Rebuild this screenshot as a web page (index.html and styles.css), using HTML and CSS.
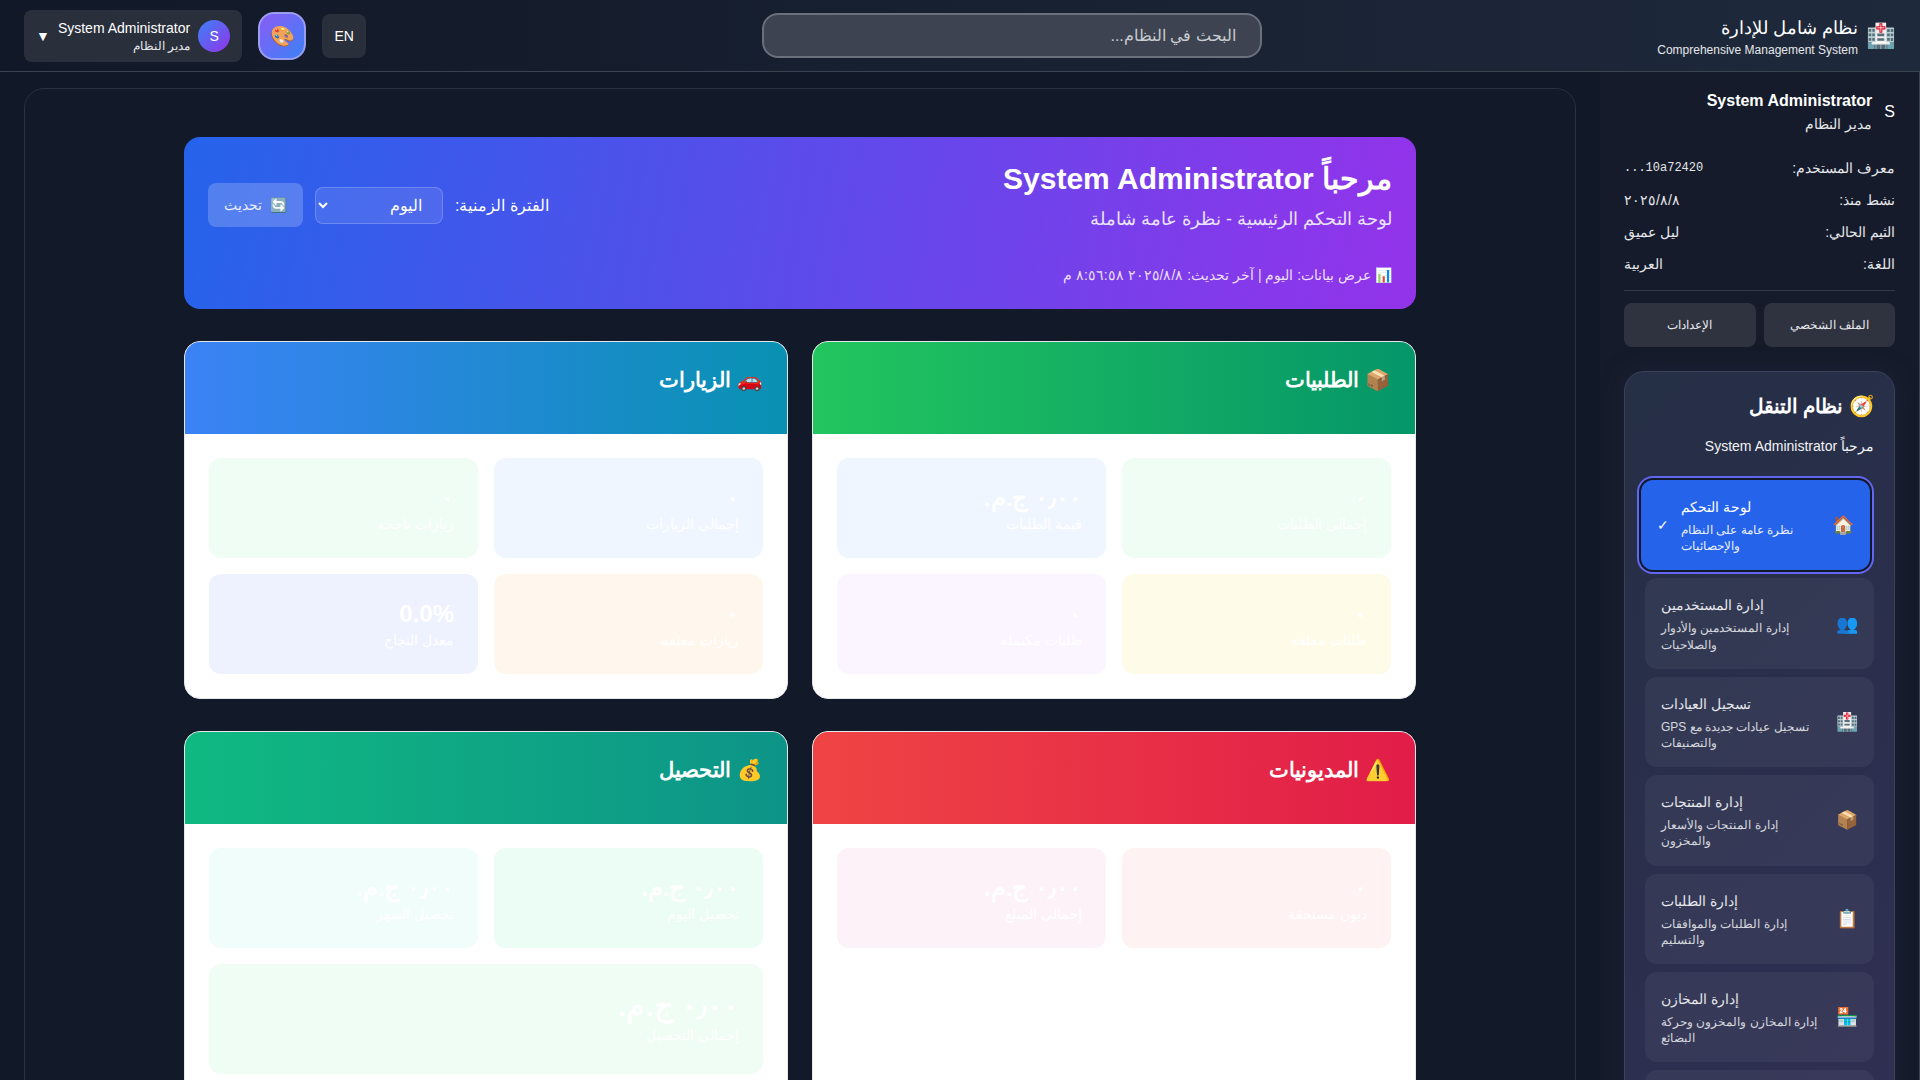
FILE: index.html
```html
<!DOCTYPE html>
<html lang="ar" dir="rtl">
<head>
<meta charset="utf-8">
<title>نظام شامل للإدارة</title>
<link rel="stylesheet" href="styles.css">
</head>
<body>
<div class="app">
  <header class="topbar">
    <div class="brand">
      <span class="brand-icon">🏥</span>
      <div>
        <div class="brand-title">نظام شامل للإدارة</div>
        <div class="brand-sub">Comprehensive Management System</div>
      </div>
    </div>
    <input class="search" type="text" placeholder="البحث في النظام...">
    <div class="top-actions">
      <button class="lang">EN</button>
      <button class="palette">🎨</button>
      <div class="chip">
        <span class="chip-avatar">S</span>
        <div class="chip-text">
          <div class="chip-name">System Administrator</div>
          <div class="chip-role">مدير النظام</div>
        </div>
        <span class="chip-caret">▼</span>
      </div>
    </div>
  </header>
  <div class="body">
    <aside class="sidebar">
      <div class="me">
        <span class="me-initial">S</span>
        <div>
          <div class="me-name">System Administrator</div>
          <div class="me-role">مدير النظام</div>
        </div>
      </div>
      <dl class="facts">
        <div class="fact"><dt>معرف المستخدم:</dt><dd class="mono">10a72420...</dd></div>
        <div class="fact"><dt>نشط منذ:</dt><dd>٢٠٢٥/٨/٨</dd></div>
        <div class="fact"><dt>الثيم الحالي:</dt><dd>ليل عميق</dd></div>
        <div class="fact"><dt>اللغة:</dt><dd>العربية</dd></div>
      </dl>
      <div class="me-actions">
        <button class="me-btn">الملف الشخصي</button>
        <button class="me-btn">الإعدادات</button>
      </div>
      <nav class="nav">
        <h2 class="nav-title">🧭 نظام التنقل</h2>
        <p class="nav-hello">مرحباً System Administrator</p>
        <ul class="nav-list">
          <li class="nav-item active">
            <span class="nav-icon">🏠</span>
            <div class="nav-text">
              <div class="nav-name">لوحة التحكم</div>
              <div class="nav-desc">نظرة عامة على النظام والإحصائيات</div>
            </div>
            <span class="nav-check">✓</span>
          </li>
          <li class="nav-item">
            <span class="nav-icon">👥</span>
            <div class="nav-text">
              <div class="nav-name">إدارة المستخدمين</div>
              <div class="nav-desc">إدارة المستخدمين والأدوار والصلاحيات</div>
            </div>
          </li>
          <li class="nav-item">
            <span class="nav-icon">🏥</span>
            <div class="nav-text">
              <div class="nav-name">تسجيل العيادات</div>
              <div class="nav-desc">تسجيل عيادات جديدة مع GPS والتصنيفات</div>
            </div>
          </li>
          <li class="nav-item">
            <span class="nav-icon">📦</span>
            <div class="nav-text">
              <div class="nav-name">إدارة المنتجات</div>
              <div class="nav-desc">إدارة المنتجات والأسعار والمخزون</div>
            </div>
          </li>
          <li class="nav-item">
            <span class="nav-icon">📋</span>
            <div class="nav-text">
              <div class="nav-name">إدارة الطلبات</div>
              <div class="nav-desc">إدارة الطلبات والموافقات والتسليم</div>
            </div>
          </li>
          <li class="nav-item">
            <span class="nav-icon">🏪</span>
            <div class="nav-text">
              <div class="nav-name">إدارة المخازن</div>
              <div class="nav-desc">إدارة المخازن والمخزون وحركة البضائع</div>
            </div>
          </li>
          <li class="nav-item">
            <span class="nav-icon">📊</span>
            <div class="nav-text">
              <div class="nav-name">التقارير</div>
              <div class="nav-desc">التقارير والإحصائيات التفصيلية</div>
            </div>
          </li>
        </ul>
      </nav>
    </aside>
    <main class="main">
      <div class="panel">
        <div class="dash">
          <section class="hero">
            <div class="hero-row">
              <div class="hero-copy">
                <h1 class="hero-title">مرحباً System Administrator</h1>
                <p class="hero-sub">لوحة التحكم الرئيسية - نظرة عامة شاملة</p>
              </div>
              <div class="hero-controls">
                <label class="period-label">الفترة الزمنية:</label>
                <select class="period">
                  <option>اليوم</option>
                  <option>هذا الأسبوع</option>
                  <option>هذا الشهر</option>
                </select>
                <button class="refresh"><span>🔄</span><span>تحديث</span></button>
              </div>
            </div>
            <p class="hero-info">📊 عرض بيانات: اليوم | آخر تحديث: ٢٠٢٥/٨/٨ ٨:٥٦:٥٨ م</p>
          </section>
          <div class="cards">
            <article class="card">
              <h3 class="card-head head-green">📦 الطلبيات</h3>
              <div class="stats">
                <div class="stat bg-green"><div class="val">٠</div><div class="lbl">إجمالي الطلبات</div></div>
                <div class="stat bg-blue"><div class="val">٠٫٠٠ ج.م.</div><div class="lbl">قيمة الطلبات</div></div>
                <div class="stat bg-yellow"><div class="val">٠</div><div class="lbl">طلبات معلقة</div></div>
                <div class="stat bg-purple"><div class="val">٠</div><div class="lbl">طلبات مكتملة</div></div>
              </div>
            </article>
            <article class="card">
              <h3 class="card-head head-blue">🚗 الزيارات</h3>
              <div class="stats">
                <div class="stat bg-blue"><div class="val">٠</div><div class="lbl">إجمالي الزيارات</div></div>
                <div class="stat bg-green"><div class="val">٠</div><div class="lbl">زيارات ناجحة</div></div>
                <div class="stat bg-orange"><div class="val">٠</div><div class="lbl">زيارات معلقة</div></div>
                <div class="stat bg-indigo"><div class="val">0.0%</div><div class="lbl">معدل النجاح</div></div>
              </div>
            </article>
            <article class="card">
              <h3 class="card-head head-red">⚠️ المديونيات</h3>
              <div class="stats">
                <div class="stat bg-red"><div class="val">٠</div><div class="lbl">ديون مستحقة</div></div>
                <div class="stat bg-pink"><div class="val">٠٫٠٠ ج.م.</div><div class="lbl">إجمالي المبلغ</div></div>
              </div>
            </article>
            <article class="card">
              <h3 class="card-head head-teal">💰 التحصيل</h3>
              <div class="stats">
                <div class="stat bg-emerald"><div class="val">٠٫٠٠ ج.م.</div><div class="lbl">تحصيل اليوم</div></div>
                <div class="stat bg-teal"><div class="val">٠٫٠٠ ج.م.</div><div class="lbl">تحصيل الشهر</div></div>
                <div class="stat stat-wide bg-green"><div class="val val-big">٠٫٠٠ ج.م.</div><div class="lbl">إجمالي التحصيل</div></div>
              </div>
            </article>
          </div>
        </div>
      </div>
    </main>
  </div>
</div>
</body>
</html>
```
FILE: styles.css
```css
* { box-sizing: border-box; }
html, body { margin: 0; height: 100%; overflow: hidden; }
body {
  font-family: "Liberation Sans", sans-serif;
  background: #111827;
  color: #fff;
  font-size: 16px;
}
h1, h2, h3, p, ul, dl, dd { margin: 0; padding: 0; }
ul { list-style: none; }
button { font: inherit; color: inherit; border: 0; cursor: pointer; }

.app { height: 100vh; display: flex; flex-direction: column; }

/* top bar */
.topbar {
  height: 72px;
  flex: none;
  display: flex;
  align-items: center;
  justify-content: space-between;
  padding: 0 24px;
  background: linear-gradient(270deg, #1e293b 0%, #111827 100%);
  border-bottom: 1px solid #3b4250;
}
.brand { display: flex; align-items: center; gap: 8px; }
.brand-icon { font-size: 24px; line-height: 32px; }
.brand-title { font-size: 18px; line-height: 28px; }
.brand-sub { font-size: 12px; line-height: 16px; color: #e5e7eb; }
.search {
  width: 500px;
  height: 45px;
  padding: 0 24px;
  border-radius: 16px;
  border: 2px solid #6a707c;
  background: #3d4350;
  color: #fff;
  font: 16px "Liberation Sans", sans-serif;
  outline: none;
}
.search::placeholder { color: #c9ccd1; opacity: 1; }
.top-actions { display: flex; align-items: center; gap: 16px; }
.lang {
  width: 44px;
  height: 44px;
  border-radius: 8px;
  background: #2a2f3c;
  font-size: 14px;
}
.palette {
  width: 48px;
  height: 48px;
  border-radius: 16px;
  border: 2px solid #9a9cf0;
  background: linear-gradient(135deg, #8b5cf6, #3b82f6);
  font-size: 20px;
  padding: 0;
}
.chip {
  height: 52px;
  display: flex;
  align-items: center;
  gap: 8px;
  padding: 0 12px;
  border-radius: 8px;
  background: #2a2f3c;
}
.chip-avatar {
  width: 32px;
  height: 32px;
  border-radius: 50%;
  display: flex;
  align-items: center;
  justify-content: center;
  background: linear-gradient(135deg, #3b82f6, #9333ea);
  font-size: 14px;
}
.chip-name { font-size: 14px; line-height: 20px; }
.chip-role { font-size: 12px; line-height: 16px; color: #e5e7eb; }
.chip-caret { font-size: 14px; }

/* layout */
.body { flex: 1; min-height: 0; display: flex; }

/* sidebar */
.sidebar {
  width: 320px;
  flex: none;
  padding: 17px 24px 16px 24px;
  background: #151b2a;
  border-right: 1px solid #3b4250;
  overflow: hidden;
}
.me { display: flex; align-items: center; gap: 12px; margin-bottom: 24px; }
.me-initial { font-size: 16px; }
.me-name { font-size: 16px; font-weight: 700; line-height: 24px; }
.me-role { font-size: 14px; line-height: 20px; margin-top: 1px; color: #e5e7eb; }
.facts { display: flex; flex-direction: column; gap: 12px; padding-bottom: 16px; border-bottom: 1px solid #303644; }
.fact { display: flex; justify-content: space-between; font-size: 14px; line-height: 20px; color: #e5e7eb; }
.fact dd { color: #e5e7eb; }
.mono { font-family: "Liberation Mono", monospace; font-size: 12px; }
.me-actions { display: flex; gap: 8px; margin-top: 12px; margin-bottom: 24px; }
.me-btn {
  flex: 1;
  height: 44px;
  border-radius: 8px;
  background: #2f3340;
  font-size: 12px;
  color: #e5e7eb;
}

.nav {
  padding: 20px;
  border-radius: 20px;
  border: 1px solid #3b4258;
  background: linear-gradient(135deg, #252f45, #302f54);
  box-shadow: 0 0 24px rgba(40, 50, 80, .35);
}
.nav-title { font-size: 20.4px; line-height: 28px; font-weight: 700; margin-bottom: 16px; }
.nav-hello { font-size: 14px; line-height: 20px; margin-bottom: 24px; color: #f3f4f6; }
.nav-list { display: flex; flex-direction: column; gap: 8px; }
.nav-item {
  display: flex;
  align-items: center;
  gap: 12px;
  padding: 16px;
  border-radius: 12px;
  background: rgba(255, 255, 255, .05);
  color: #e5e7eb;
}
.nav-item.active {
  background: #2563eb;
  color: #fff;
  transform: translateX(-4px);
  box-shadow: 0 0 0 2px #111827, 0 0 0 4px #6366f1;
}
.nav-icon { font-size: 18px; flex: none; }
.nav-text { flex: 1; text-align: left; min-width: 0; }
.nav-name { font-size: 14px; line-height: 22px; }
.nav-desc { font-size: 12px; line-height: 16.2px; margin-top: 4px; opacity: .9; }
.nav-check { font-size: 14px; flex: none; }

/* main */
.main { flex: 1; min-width: 0; padding: 16px 24px; overflow: hidden; }
.panel {
  border: 1px solid #2a303d;
  border-radius: 20px;
  padding: 24px;
  background: #121a29;
  min-height: 100%;
}
.dash { max-width: 1280px; margin: 0 auto; padding: 24px; }
.hero {
  padding: 24px;
  border-radius: 16px;
  background: linear-gradient(100deg, #2563eb, #9333ea);
}
.hero-row { display: flex; justify-content: space-between; align-items: center; }
.hero-copy { padding-bottom: 16px; }
.hero-title { font-size: 30px; line-height: 36px; font-weight: 700; margin-bottom: 8px; }
.hero-sub { font-size: 18px; line-height: 28px; color: #e9e3fb; }
.hero-controls { display: flex; align-items: center; gap: 12px; }
.period-label { font-size: 16px; }
.period {
  width: 128px;
  height: 37px;
  padding: 0 16px;
  border-radius: 8px;
  border: 1px solid rgba(255, 255, 255, .2);
  background: rgba(255, 255, 255, .1);
  color: #fff;
  font: 16px "Liberation Sans", sans-serif;
}
.period option { color: #111827; }
.refresh {
  height: 44px;
  padding: 0 16px;
  display: flex;
  align-items: center;
  gap: 8px;
  border-radius: 8px;
  background: rgba(255, 255, 255, .2);
  font-size: 14px;
  color: #eef;
}
.hero-info { margin-top: 16px; font-size: 14px; line-height: 20px; color: #ecdffb; }

.cards { display: grid; grid-template-columns: 1fr 1fr; gap: 32px 24px; margin-top: 32px; }
.card {
  border: 1px solid #e5e7eb;
  border-radius: 16px;
  background: #fff;
  overflow: hidden;
}
.card-head {
  padding: 24px 24px 40px;
  font-size: 20.6px;
  line-height: 28px;
  font-weight: 700;
}
.head-green { background: linear-gradient(90deg, #22c55e, #059669); }
.head-blue { background: linear-gradient(90deg, #3b82f6, #0891b2); }
.head-red { background: linear-gradient(90deg, #ef4444, #e11d48); }
.head-teal { background: linear-gradient(90deg, #10b981, #0d9488); }
.stats { display: grid; grid-template-columns: 1fr 1fr; gap: 16px; padding: 24px; }
.stat { padding: 24px; border-radius: 12px; }
.stat-wide { grid-column: 1 / -1; padding-bottom: 29px; }
.val { font-size: 24px; line-height: 32px; font-weight: 700; }
.val-big { font-size: 30px; line-height: 36px; margin-bottom: 1px; }
.lbl { font-size: 14px; line-height: 20px; color: #fff; }
.bg-green { background: #f0fdf4; }
.bg-blue { background: #eff6ff; }
.bg-yellow { background: #fefce8; }
.bg-purple { background: #faf5ff; }
.bg-orange { background: #fff7ed; }
.bg-indigo { background: #eef2ff; }
.bg-red { background: #fef2f2; }
.bg-pink { background: #fdf2f8; }
.bg-emerald { background: #ecfdf5; }
.bg-teal { background: #f0fdfa; }
```
